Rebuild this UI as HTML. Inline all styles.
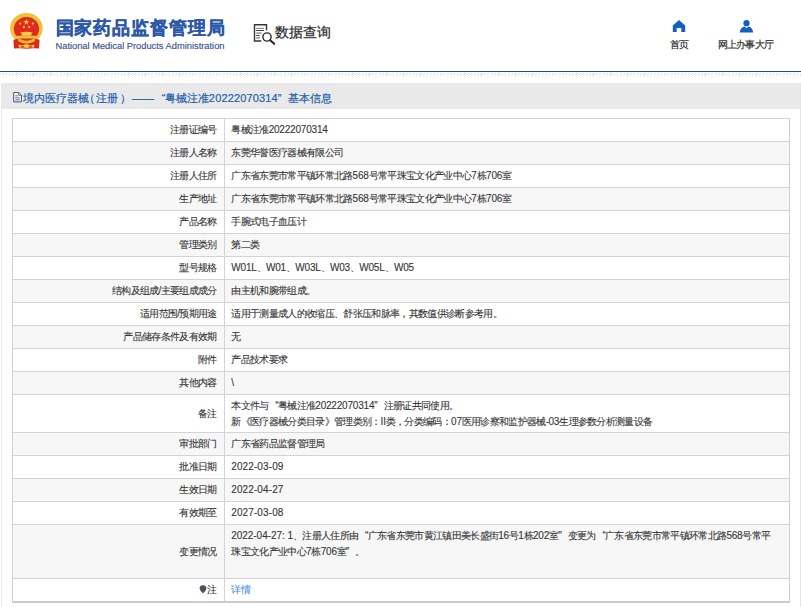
<!DOCTYPE html>
<html><head><meta charset="utf-8"><style>
html,body{margin:0;padding:0;background:#fff;}
body{width:801px;height:607px;overflow:hidden;position:relative;font-family:"Liberation Sans",sans-serif;}
.abs{position:absolute;}
.emb{position:absolute;left:0;top:0;}
.t1{position:absolute;left:55.5px;top:15px;font-size:17.6px;letter-spacing:0.9px;font-weight:bold;color:#2b58a8;-webkit-text-stroke:0.3px #2b58a8;line-height:26px;white-space:nowrap;}
.t2{position:absolute;left:55.5px;top:39.7px;font-size:9.3px;color:#34548f;-webkit-text-stroke:0.15px #34548f;line-height:12px;white-space:nowrap;}
.srch{position:absolute;left:250px;top:20px;}
.t3{position:absolute;left:274.7px;top:20.5px;font-size:14.4px;color:#2e2e2e;-webkit-text-stroke:0.25px #2e2e2e;line-height:22px;white-space:nowrap;}
.house{position:absolute;left:672px;top:19.5px;}
.person{position:absolute;left:738.5px;top:19.5px;}
.nav{position:absolute;top:37.7px;font-size:10px;letter-spacing:-0.67px;color:#333;-webkit-text-stroke:0.2px #333;line-height:14px;white-space:nowrap;}
.bl{position:absolute;left:0;top:71px;width:801px;height:1px;background:#214f86;}
.dots{position:absolute;left:0;top:73px;width:801px;height:2px;background:repeating-linear-gradient(135deg,#dedede 0 0.8px,#fff 0.8px 2.4px);opacity:1;}
.dots2{position:absolute;left:0;top:75px;width:801px;height:2px;background:repeating-linear-gradient(135deg,#f0f0f0 0 0.8px,#fff 0.8px 2.4px);opacity:1;}
.box{position:absolute;left:1px;top:83px;width:798px;height:600px;border-left:1px solid #e6e6e6;border-right:1px solid #e6e6e6;}
.band{position:absolute;left:1px;top:83px;width:799px;height:26px;background:#e9e9e9;}
.doc{position:absolute;left:12.8px;top:91.5px;}
.t4{position:absolute;left:0;top:89.5px;font-size:11px;letter-spacing:-0.1px;color:#1f5fad;line-height:16px;white-space:nowrap;-webkit-text-stroke:0.2px #1f5fad;}
.t4>span{position:absolute;top:0;}
.tbl{position:absolute;left:12px;top:118px;width:776px;height:482px;border:1px solid #cfcfcf;border-bottom:2px solid #cbcbcb;}
.r{position:absolute;left:13px;width:776px;background:#fff;border-top:1px solid #d4d4d4;box-sizing:border-box;font-size:10px;letter-spacing:-0.67px;color:#333;-webkit-text-stroke:0.1px #333;}
.r.g{background:#f7f7f7;}
.l{position:absolute;left:0;top:0;bottom:0;width:211px;display:flex;align-items:center;justify-content:flex-end;box-sizing:border-box;padding-right:7.3px;white-space:nowrap;}
.v{position:absolute;left:211px;top:0;bottom:0;right:0;border-left:1px solid #d4d4d4;display:flex;align-items:center;padding-left:6.3px;line-height:15.56px;white-space:nowrap;}
.v>div{}
.n{letter-spacing:-0.2px;}
.qo{display:inline-block;width:0.933em;text-align:right;}
.qc{display:inline-block;width:0.933em;text-align:left;}
a{color:#3f8fe8;-webkit-text-stroke:0.1px #3f8fe8;}
.pin{display:inline-block;vertical-align:middle;margin-right:0.5px;position:relative;top:-0.5px;}
</style></head><body>
<svg class="emb" width="60" height="60" viewBox="0 0 60 60">
<ellipse cx="26.4" cy="28.3" rx="16.3" ry="15.2" fill="#f0c036"/>
<ellipse cx="26.5" cy="28.9" rx="12.6" ry="11.9" fill="#df2a1f"/>
<path d="M26.3 18.9 l0.75 2.2 h2.3 l-1.85 1.35 0.7 2.2 -1.9 -1.35 -1.9 1.35 0.7 -2.2 -1.85 -1.35 h2.3z" fill="#f6d04c"/>
<circle cx="20.1" cy="23.6" r="1.15" fill="#f3c54e"/><circle cx="32.9" cy="23.6" r="1.15" fill="#f3c54e"/>
<circle cx="23.9" cy="27.1" r="1.15" fill="#f3c54e"/><circle cx="29.1" cy="27.1" r="1.15" fill="#f3c54e"/>
<path d="M20.2 32.6 Q26.5 31 32.8 32.6 L31.8 33.6 H21.2Z M21.6 33.5 h9.8 v2.3 h-9.8z" fill="#f4cd4a"/>
<path d="M15.3 35.7 h22.4 v2.8 h-22.4z" fill="#f0c036"/>
<path d="M13.4 39.8 L17.6 38.8 Q26.5 44.5 35.4 38.8 L39.6 39.8 L39 48.6 Q33 47.8 26.5 48.8 Q20 47.8 14 48.6 Z" fill="#d62b21"/>
<path d="M17.6 39 Q26.5 43.8 35.4 39 L34.4 41.4 Q26.5 45.6 18.6 41.4 Z" fill="#f0c036"/>
<path d="M18.6 44.6 q4 1.4 7.9 -0.5 q3.9 1.9 7.9 0.5 l-0.4 3.1 q-3.8 -0.9 -7.5 0.4 q-3.7 -1.3 -7.5 -0.4z" fill="#f2c440"/>
<path d="M21 45.7 h3 v1.1 h-3z M29 45.7 h3 v1.1 h-3z" fill="#df2a1f"/>
</svg>
<div class="t1">国家药品监督管理局</div>
<div class="t2">National Medical Products Administration</div>
<svg class="srch" width="30" height="28" viewBox="0 0 30 28">
<path d="M16.5 10.2 V4.8 H4.5 V21 H11.4" fill="none" stroke="#353535" stroke-width="1.4"/>
<path d="M6.2 8.4 h7.8" stroke="#8a8a8a" stroke-width="1.2"/>
<path d="M6.2 10.5 h7.8 M6.2 15.5 h3.4" stroke="#3a3a3a" stroke-width="1.1"/>
<path d="M6.2 13.2 h5.3 M6.2 17.8 h3.8" stroke="#7a7a7a" stroke-width="1.2"/>
<circle cx="17" cy="17" r="4.1" fill="#fff" stroke="#2a2a2a" stroke-width="1.4"/>
<path d="M20.2 20.2 L24.2 23.8" stroke="#2a2a2a" stroke-width="2.1" stroke-linecap="round"/>
</svg>
<div class="t3">数据查询</div>
<svg class="house" width="14" height="13" viewBox="0 0 14 13"><path d="M7 0 L13.2 5.6 V12 H9.3 V8 H4.7 V12 H0.8 V5.6 Z" fill="#1560bd"/></svg><svg class="person" width="15" height="13" viewBox="0 0 15 13"><circle cx="7.5" cy="3.2" r="3.1" fill="#1560bd"/><path d="M0.8 12.5 C1.2 8.5 3.5 6.8 5.6 6.4 L7.5 8.2 L9.4 6.4 C11.5 6.8 13.8 8.5 14.2 12.5 Z" fill="#1560bd"/></svg>
<div class="nav" style="left:670px">首页</div>
<div class="nav" style="left:717.5px">网上办事大厅</div>
<div class="bl"></div><div class="dots"></div><div class="dots2"></div>
<div class="box"></div>
<div class="band"></div>
<svg class="doc" width="10" height="11" viewBox="0 0 10 11"><path d="M0.7 0.6 H5.9 L8.4 3.1 V9.9 H0.7 Z" fill="#fafbfd" stroke="#3f5379" stroke-width="1"/><path d="M5.6 0.8 V3.4 H8.2" fill="none" stroke="#3f5379" stroke-width="0.7"/><path d="M2.3 3.8 h2.4 M2.3 5.9 h4.4 M2.3 7.9 h4.4" stroke="#3f5379" stroke-width="0.85"/></svg>
<div class="t4"><span style="left:23px">境内医疗器械</span><span style="left:83.7px">（</span><span style="left:96px">注册</span><span style="left:120px">）</span><span style="left:132px">——</span><span style="left:155px"><span class="qo">“</span>粤械注准<span class="n" style="letter-spacing:0.15px">20222070314</span><span class="qc">”</span></span><span style="left:288px">基本信息</span></div>
<div class="tbl"></div>
<div class="r" style="top:118px;height:23px"><div class="l">注册证编号</div><div class="v"><div>粤械注准<span class="n">20222070314</span></div></div></div><div class="r g" style="top:141px;height:23px"><div class="l">注册人名称</div><div class="v"><div>东莞华誉医疗器械有限公司</div></div></div><div class="r" style="top:164px;height:23px"><div class="l">注册人住所</div><div class="v"><div>广东省东莞市常平镇环常北路<span class="n">568</span>号常平珠宝文化产业中心<span class="n">7</span>栋<span class="n">706</span>室</div></div></div><div class="r g" style="top:187px;height:23px"><div class="l">生产地址</div><div class="v"><div>广东省东莞市常平镇环常北路<span class="n">568</span>号常平珠宝文化产业中心<span class="n">7</span>栋<span class="n">706</span>室</div></div></div><div class="r" style="top:210px;height:23px"><div class="l">产品名称</div><div class="v"><div>手腕式电子血压计</div></div></div><div class="r g" style="top:233px;height:23px"><div class="l">管理类别</div><div class="v"><div>第二类</div></div></div><div class="r" style="top:256px;height:23px"><div class="l">型号规格</div><div class="v"><div><span class="n">W01L</span>、<span class="n">W01</span>、<span class="n">W03L</span>、<span class="n">W03</span>、<span class="n">W05L</span>、<span class="n">W05</span></div></div></div><div class="r g" style="top:279px;height:23px"><div class="l">结构及组成/主要组成成分</div><div class="v"><div>由主机和腕带组成。</div></div></div><div class="r" style="top:302px;height:23px"><div class="l">适用范围/预期用途</div><div class="v"><div>适用于测量成人的收缩压、舒张压和脉率，其数值供诊断参考用。</div></div></div><div class="r g" style="top:325px;height:23px"><div class="l">产品储存条件及有效期</div><div class="v"><div>无</div></div></div><div class="r" style="top:348px;height:23px"><div class="l">附件</div><div class="v"><div>产品技术要求</div></div></div><div class="r g" style="top:371px;height:23px"><div class="l">其他内容</div><div class="v"><div>\</div></div></div><div class="r" style="top:394px;height:38px"><div class="l">备注</div><div class="v"><div>本文件与<span class="qo">“</span>粤械注准<span class="n">20222070314</span><span class="qc">”</span>注册证共同使用。<br>新《医疗器械分类目录》管理类别：<span class="n">II</span>类，分类编码：<span class="n">07</span>医用诊察和监护器械-<span class="n">03</span>生理参数分析测量设备</div></div></div><div class="r g" style="top:432px;height:23px"><div class="l">审批部门</div><div class="v"><div>广东省药品监督管理局</div></div></div><div class="r" style="top:455px;height:23px"><div class="l">批准日期</div><div class="v"><div><span class="n" style="letter-spacing:0.1px">2022-03-09</span></div></div></div><div class="r g" style="top:478px;height:23px"><div class="l">生效日期</div><div class="v"><div><span class="n" style="letter-spacing:0.1px">2022-04-27</span></div></div></div><div class="r" style="top:501px;height:23px"><div class="l">有效期至</div><div class="v"><div><span class="n" style="letter-spacing:0.1px">2027-03-08</span></div></div></div><div class="r g" style="top:524px;height:54px"><div class="l">变更情况</div><div class="v"><div><span class="n" style="letter-spacing:-0.05px">2022-04-27: 1</span>、注册人住所由<span class="qo">“</span>广东省东莞市黄江镇田美长盛街<span class="n">16</span>号<span class="n">1</span>栋<span class="n">202</span>室<span class="qc">”</span>变更为<span class="qo">“</span>广东省东莞市常平镇环常北路<span class="n">568</span>号常平<br>珠宝文化产业中心<span class="n">7</span>栋<span class="n">706</span>室<span class="qc">”</span>。<br>&nbsp;</div></div></div><div class="r" style="top:578px;height:23px"><div class="l"><svg class="pin" width="8" height="9" viewBox="0 0 8 9"><path d="M4 8.6 C3.2 7.2 0.6 5.6 0.6 3.6 A3.4 3.4 0 0 1 7.4 3.6 C7.4 5.6 4.8 7.2 4 8.6Z" fill="#4a5260"/></svg>注</div><div class="v"><div><a>详情</a></div></div></div>
</body></html>
